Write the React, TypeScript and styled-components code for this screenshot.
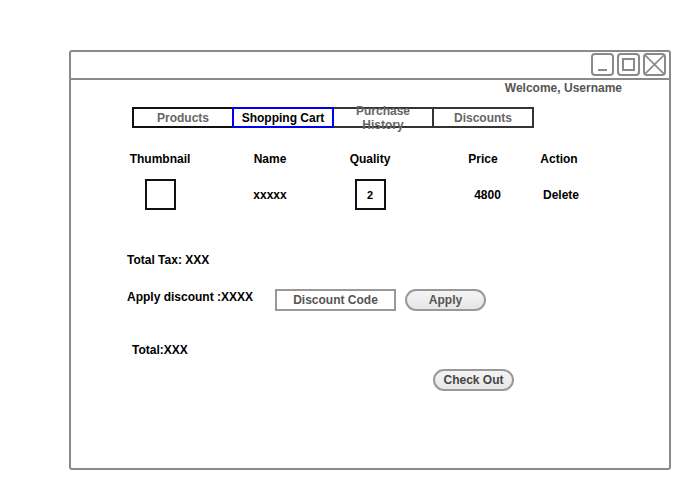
import React from "react";
import styled, { createGlobalStyle } from "styled-components";

const Global = createGlobalStyle`
  html, body { margin: 0; padding: 0; background: #fff; }
  body { font-family: "Liberation Sans", Arial, sans-serif; font-weight: bold; font-size: 12px; color: #000; }
`;

const Page = styled.div`
  padding: 50px 0 0 69px;
  width: 690px;
  height: 490px;
  box-sizing: border-box;
`;

const Window = styled.div`
  width: 602px;
  height: 420px;
  box-sizing: border-box;
  border: 2px solid #8a8a8a;
  border-radius: 3px;
  display: flex;
  flex-direction: column;
`;

const TitleBar = styled.div`
  height: 28px;
  box-sizing: border-box;
  border-bottom: 2px solid #8a8a8a;
  display: flex;
  justify-content: flex-end;
  align-items: flex-start;
  padding: 1px 3px 0 0;
  gap: 3px;
`;

const WinButton = styled.div`
  width: 23px;
  height: 23px;
  box-sizing: border-box;
  border: 2px solid #8a8a8a;
  border-radius: 4px;
  display: flex;
  align-items: center;
  justify-content: center;
`;

const Content = styled.div`
  display: flex;
  flex-direction: column;
  padding-left: 56px;
`;

const Welcome = styled.div`
  align-self: flex-end;
  margin-right: 47px;
  margin-top: 1px;
  line-height: 14px;
  color: #555;
`;

const Tabs = styled.div`
  display: flex;
  margin-top: 12px;
  margin-left: 5px;
`;

const Tab = styled.div<{ $border: string; $active?: boolean }>`
  position: relative;
  z-index: ${(p) => (p.$active ? 1 : 0)};
  width: 102px;
  height: 21px;
  box-sizing: border-box;
  border: 2px solid ${(p) => p.$border};
  display: flex;
  align-items: center;
  justify-content: center;
  text-align: center;
  line-height: 14px;
  color: ${(p) => (p.$active ? "#000" : "#666")};
  white-space: pre-line;
  & + & { margin-left: -2px; }
`;

const Grid = styled.div<{ $top: number }>`
  display: grid;
  grid-template-columns: 80px 140px 60px 46px 74px 78px;
  margin-left: -7px;
  margin-top: ${(p) => p.$top}px;
  align-items: center;
`;

const Cell = styled.div<{ $col?: number; $nudge?: number; $height?: number }>`
  grid-column: ${(p) => (p.$col ? p.$col : "auto")};
  height: ${(p) => p.$height ?? 14}px;
  line-height: 14px;
  display: flex;
  align-items: center;
  justify-content: center;
  padding-left: ${(p) => p.$nudge ?? 0}px;
`;

const Thumb = styled.div`
  width: 31px;
  height: 31px;
  box-sizing: border-box;
  border: 2px solid #111;
  margin-left: 1px;
`;

const QtyBox = styled.div`
  width: 31px;
  height: 31px;
  box-sizing: border-box;
  border: 2px solid #111;
  display: flex;
  align-items: center;
  justify-content: center;
  font-size: 11px;
`;

const Label = styled.div<{ $top: number; $left?: number }>`
  margin-top: ${(p) => p.$top}px;
  margin-left: ${(p) => p.$left ?? 0}px;
  line-height: 14px;
`;

const DiscountRow = styled.div`
  display: flex;
  align-items: flex-start;
  margin-top: 22px;
`;

const DiscountLabel = styled.div`
  line-height: 14px;
  margin-top: 1px;
  width: 148px;
`;

const CodeBox = styled.div`
  width: 121px;
  height: 22px;
  box-sizing: border-box;
  border: 2px solid #999;
  color: #555;
  display: flex;
  align-items: center;
  justify-content: center;
`;

const PillButton = styled.div<{ $color?: string }>`
  width: 81px;
  height: 22px;
  box-sizing: border-box;
  border: 2px solid #999;
  border-radius: 11px;
  background: linear-gradient(#f4f4f4, #e6e6e6);
  color: ${(p) => p.$color ?? "#555"};
  display: flex;
  align-items: center;
  justify-content: center;
`;

const CheckRow = styled.div`
  display: flex;
  margin-top: 12px;
  margin-left: 306px;
`;

export default function App() {
  return (
    <Page>
      <Global />
      <Window>
        <TitleBar>
          <WinButton>
            <svg width="19" height="19" viewBox="0 0 19 19">
              <line x1="5" y1="15" x2="14" y2="15" stroke="#8a8a8a" strokeWidth="2" />
            </svg>
          </WinButton>
          <WinButton>
            <svg width="19" height="19" viewBox="0 0 19 19">
              <rect x="4" y="4" width="11" height="11" fill="none" stroke="#8a8a8a" strokeWidth="2" />
            </svg>
          </WinButton>
          <WinButton>
            <svg width="19" height="19" viewBox="0 0 19 19">
              <line x1="0" y1="0" x2="19" y2="19" stroke="#8a8a8a" strokeWidth="1.6" />
              <line x1="19" y1="0" x2="0" y2="19" stroke="#8a8a8a" strokeWidth="1.6" />
            </svg>
          </WinButton>
        </TitleBar>
        <Content>
          <Welcome>Welcome, Username</Welcome>
          <Tabs>
            <Tab $border="#111">Products</Tab>
            <Tab $border="#0000ee" $active>Shopping Cart</Tab>
            <Tab $border="#333">{"Purchase\nHistory"}</Tab>
            <Tab $border="#333">Discounts</Tab>
          </Tabs>
          <Grid $top={24}>
            <Cell>Thumbnail</Cell>
            <Cell>Name</Cell>
            <Cell>Quality</Cell>
            <Cell $col={5}>Price</Cell>
            <Cell>Action</Cell>
          </Grid>
          <Grid $top={13}>
            <Cell $height={31}><Thumb /></Cell>
            <Cell $height={31}>xxxxx</Cell>
            <Cell $height={31}><QtyBox>2</QtyBox></Cell>
            <Cell $col={5} $height={31} $nudge={9}>4800</Cell>
            <Cell $height={31} $nudge={4}>Delete</Cell>
          </Grid>
          <Label $top={43}>Total Tax: XXX</Label>
          <DiscountRow>
            <DiscountLabel>Apply discount :XXXX</DiscountLabel>
            <CodeBox>Discount Code</CodeBox>
            <PillButton style={{ marginLeft: 9 }}>Apply</PillButton>
          </DiscountRow>
          <Label $top={32} $left={5}>Total:XXX</Label>
          <CheckRow>
            <PillButton $color="#444">Check Out</PillButton>
          </CheckRow>
        </Content>
      </Window>
    </Page>
  );
}
